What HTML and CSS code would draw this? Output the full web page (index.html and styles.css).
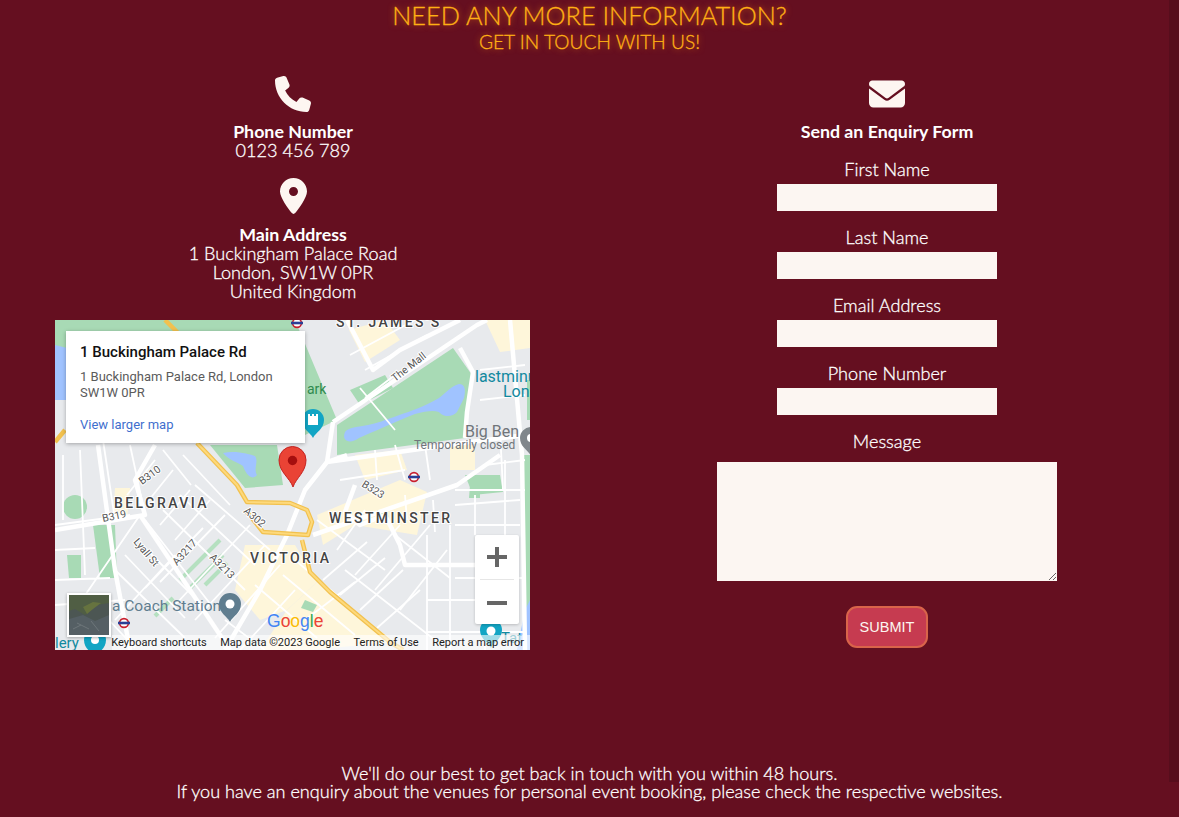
FILE: index.html
```html
<!DOCTYPE html>
<html lang="en">
<head>
    <meta charset="UTF-8">
    <meta name="viewport" content="width=device-width, initial-scale=1.0">
    <title>Contact</title>
    <link rel="stylesheet" href="styles.css">
</head>
<body>
<div class="edge"></div>

<header class="intro">
    <h1>NEED ANY MORE INFORMATION?</h1>
    <h2>GET IN TOUCH WITH US!</h2>
</header>

<main class="contact">
    <section class="details">
        <svg class="icon phone" viewBox="0 0 512 512"><path d="M164.9 24.6c-7.7-18.6-28-28.5-47.4-23.2l-88 24C12.1 30.2 0 46 0 64C0 311.4 200.6 512 448 512c18 0 33.8-12.1 38.6-29.5l24-88c5.3-19.4-4.6-39.7-23.2-47.4l-96-40c-16.3-6.8-35.2-2.1-46.3 11.6L304.7 368C234.3 334.7 177.3 277.7 144 207.3L193.3 167c13.7-11.2 18.4-30 11.6-46.3l-40-96z"/></svg>
        <h3>Phone Number</h3>
        <p>0123 456 789</p>
        <svg class="icon pin" viewBox="0 0 384 512"><path d="M215.7 499.2C267 435 384 279.4 384 192C384 86 298 0 192 0S0 86 0 192c0 87.4 117 243 168.3 307.2c12.3 15.3 35.1 15.3 47.4 0zM192 256c-35.3 0-64-28.7-64-64s28.7-64 64-64s64 28.7 64 64s-28.7 64-64 64z"/></svg>
        <h3 class="address-title">Main Address</h3>
        <p>1 Buckingham Palace Road<br>London, SW1W 0PR<br>United Kingdom</p>

        <div class="map">
            <svg class="map-art" viewBox="0 0 475 330">
                <defs>
                    <g id="tube">
                        <circle r="4.4" fill="#fff" stroke="#c8202f" stroke-width="1.6"/>
                        <rect x="-6" y="-1.3" width="12" height="2.6" fill="#2b3f96"/>
                    </g>
                    <path id="drop" d="M0 0C-3-6-11-9-11-18a11 11 0 0 1 22 0C11-9 3-6 0 0z"/>
                </defs>

                <rect width="475" height="330" fill="#e8eaed"/>

                <!-- built up bits -->
                <g fill="#fef6da">
                    <path d="M262 195L345 160 372 172 362 215 300 205 268 225z"/>
                    <path d="M190 225L240 225 262 262 232 290 205 300 180 270z"/>
                    <path d="M232 290L262 262 340 322 255 330 205 330z"/>
                    <path d="M300 135L345 130 352 150 310 160z"/>
                    <path d="M90 0L135 0 130 12 90 12z"/>
                    <path d="M294 10L330 0 345 20 310 42z"/>
                    <path d="M430 0L475 0 475 28 445 32z"/>
                    <path d="M60 168L75 168 72 200 58 200z"/>
                    <path d="M395 125L420 125 420 150 395 150z"/>
                </g>

                <!-- parks -->
                <g fill="#a8dab5">
                    <path d="M0 0L110 0 240 0 282 100 250 115 180 110 130 80 0 60z"/>
                    <path d="M282 105L398 28 417 55 412 105 410 118 282 135z"/>
                    <path d="M155 125L222 125 228 165 190 168z"/>
                    <path d="M38 205L60 205 62 258 45 258z"/>
                    <path d="M12 235L26 235 26 258 14 258z"/>
                    <path d="M20 175a8 8 0 0 1 0 24a8 8 0 0 1 0-24z"/>
                    <path d="M467 135L475 135 475 290 470 290z"/>
                    <path d="M295 70L330 55 338 68 305 85z"/>
                    <path d="M415 165L425 165 425 178 414 178z"/>
                    <path d="M472 60L475 60 475 100 472 100z"/>
                    <path d="M410 155L445 155 448 172 418 175z"/>
                    <path d="M322 190L332 190 334 200 322 200z"/>
                    <path d="M250 280L262 285 258 292 246 288z"/>
                </g>
                <g fill="none" stroke="#b5e0c0" stroke-width="4">
                    <path d="M100 296L118 278"/>
                    <path d="M125 260L165 220"/>
                    <path d="M135 268L168 235"/>
                    <path d="M150 265L172 243"/>
                </g>

                <!-- water -->
                <g fill="#a0c3ff">
                    <path d="M290 112C296 105 310 108 330 100C360 90 372 85 384 78C392 72 396 66 404 64C410 64 411 70 409 78C406 84 404 88 402 92C398 97 390 97 386 94C384 90 374 90 360 94C340 102 318 112 304 118C296 124 286 122 290 112z"/>
                    <path d="M0 25L12 28 12 80 0 80z"/>
                    <path d="M168 133C180 130 195 134 200 136C204 142 198 148 202 155C196 162 190 152 188 146C182 142 174 140 168 133z"/>
                    <path d="M470 290L475 280 475 330 462 330z"/>
                </g>

                <!-- side streets -->
                <g fill="none" stroke="#fff" stroke-width="1.8">
                    <path d="M8 135L8 200M25 130L30 255M48 120L60 200M75 125L90 195M108 130L136 165M128 135L175 185"/>
                    <path d="M0 205L75 195M0 260L55 258M0 285L70 280M85 195L20 290M0 230L40 228"/>
                    <path d="M90 200L160 290M108 190L190 270M125 175L200 245M140 165L215 230M60 250L130 318M40 285L80 328"/>
                    <path d="M120 235L60 300M148 208L90 268M170 195L105 262M195 205L120 285M210 225L140 300M225 245L160 318M240 270L185 330"/>
                    <path d="M70 235L130 298M84 222L146 284M100 140L72 175M118 150L90 185M135 170L105 205M155 180L120 220"/>
                    <path d="M170 300L210 330M200 265L262 318M228 255L300 315"/>
                    <path d="M262 200L330 250M282 230L310 190M300 255L345 205M320 270L375 205M345 290L392 230M290 250L380 320M340 215L395 258"/>
                    <path d="M268 260L312 222M285 275L330 238M305 290L348 250M322 308L365 270M250 300L300 262M240 240L285 278"/>
                    <path d="M372 215L372 330M395 205L395 330M420 175L420 215M400 258L470 258M372 280L420 280M372 312L470 312M340 125L350 160M370 125L375 160M445 110L448 170M400 170L470 170"/>
                    <path d="M378 180L380 212M400 185L465 180M400 205L465 205M350 175L352 200M430 215L430 330M450 140L450 215"/>
                    <path d="M295 35L360 0M310 50L372 15M340 55L310 78M305 68L340 110M320 130L322 160M285 160L350 150M430 145L470 140M425 50L470 45M425 80L470 75"/>
                </g>

                <!-- main white roads -->
                <g fill="none" stroke="#fff" stroke-width="4.500" stroke-linejoin="round">
                    <path d="M278 102L422 5 432 0"/>
                    <path d="M272 142L408 123 470 115"/>
                    <path d="M405 28L418 52 412 92 410 118"/>
                    <path d="M258 215L402 165 445 135"/>
                    <path d="M272 142L250 170 232 215 205 270 170 330"/>
                    <path d="M278 102L272 142 292 135"/>
                    <path d="M0 210L90 195 80 160 100 125"/>
                    <path d="M43 125L60 250 75 330"/>
                    <path d="M85 195L125 255 175 330"/>
                    <path d="M300 165L290 192 305 205 330 195 345 225 350 245 420 245"/>
                    <path d="M292 0L318 50 345 30 405 0"/>
                    <path d="M455 0L467 135 470 330"/>
                </g>

                <!-- A roads -->
                <g fill="none" stroke="#f2c14e" stroke-width="4.5" stroke-linejoin="round">
                    <path d="M110 0L145 35"/>
                    <path d="M0 122L10 110"/>
                    <path d="M142 123L182 165 192 182 235 183 252 190 257 202 253 215 208 212 192 192"/>
                    <path d="M247 220L255 252 275 272 335 322 348 330"/>
                </g>
                <g fill="none" stroke="#fdd97c" stroke-width="2" stroke-linejoin="round">
                    <path d="M142 123L182 165 192 182 235 183 252 190 257 202 253 215 208 212 192 192"/>
                    <path d="M247 220L255 252 275 272 335 322 348 330"/>
                </g>

                <!-- labels -->
                <text class="area" x="59" y="188">BELGRAVIA</text>
                <text class="area" x="274" y="203">WESTMINSTER</text>
                <text class="area" x="195" y="243">VICTORIA</text>
                <text class="area" x="281" y="7">ST. JAMES'S</text>
                <text class="road" transform="translate(87 165) rotate(-36)">B310</text>
                <text class="road" transform="translate(48 202) rotate(-12)">B319</text>
                <text class="road" transform="translate(78 222) rotate(50)">Lyall St</text>
                <text class="road" transform="translate(122 246) rotate(-48)">A3217</text>
                <text class="road" transform="translate(154 238) rotate(45)">A3213</text>
                <text class="road" transform="translate(188 192) rotate(40)">A302</text>
                <text class="road" transform="translate(306 166) rotate(32)">B323</text>
                <text class="road" transform="translate(340 62) rotate(-38)">The Mall</text>
                <text class="park" x="252" y="74">ark</text>
                <text class="poi" x="420" y="62">lastminu</text>
                <text class="poi" x="448" y="77">Lon</text>
                <text class="sight" x="410" y="117">Big Ben</text>
                <text class="closed" x="359" y="129">Temporarily closed</text>
                <text class="station" x="57" y="291">a Coach Station</text>
                <text class="poi small" x="0" y="328">lery</text>
                <text class="poi small" x="446" y="323">Tat</text>

                <!-- markers -->
                <use href="#tube" x="242" y="3"/>
                <use href="#tube" x="359" y="157"/>
                <use href="#tube" x="69" y="303"/>
                <use href="#drop" x="258" y="118" fill="#12a5c4"/>
                <path d="M253 94h2v2h2v-2h2v2h2v-2h2v11h-10z" fill="#fff"/>
                <use href="#drop" x="175" y="302" fill="#5f7d8f"/>
                <circle cx="175" cy="284" r="4.5" fill="#fff"/>
                <use href="#drop" x="476" y="136" fill="#80868b"/>
                <circle cx="476" cy="118" r="4" fill="#fff"/>
                <use href="#drop" x="40" y="338" fill="#12a5c4"/>
                <circle cx="40" cy="320" r="4" fill="#fff"/>
                <use href="#drop" x="436" y="328" fill="#12a5c4"/>
                <circle cx="436" cy="311" r="4.5" fill="#fff"/>

                <path d="M238 167C235 158 224 152 224 140a13.5 13.5 0 0 1 27 0C251 152 241 158 238 167z" fill="#ea4335" stroke="#c5221f"/>
                <circle cx="237.500" cy="140.500" r="4.700" fill="#a50e0e"/>

                <text class="logo" x="212" y="307"><tspan fill="#4285f4">G</tspan><tspan fill="#ea4335">o</tspan><tspan fill="#fbbc04">o</tspan><tspan fill="#4285f4">g</tspan><tspan fill="#34a853">l</tspan><tspan fill="#ea4335">e</tspan></text>
            </svg>

            <div class="map-card">
                <h4>1 Buckingham Palace Rd</h4>
                <p>1 Buckingham Palace Rd, London SW1W 0PR</p>
                <a href="#">View larger map</a>
            </div>

            <div class="zoom-box">
                <div class="zoom-btn"><span class="bar"></span><span class="bar tall"></span></div>
                <div class="zoom-btn"><span class="bar"></span></div>
            </div>

            <svg class="thumb" viewBox="0 0 40 40">
                <rect width="40" height="40" fill="#4c5653"/>
                <path d="M0 0H40V8L28 10 16 20 6 14 0 16z" fill="#505e44"/>
                <path d="M14 12L24 7 32 8 24 14 18 19z" fill="#66733f"/>
                <path d="M0 24L14 20 26 26 40 20V40H0z" fill="#555f64"/>
                <path d="M8 28L20 34M22 26L30 36M4 34L12 30" stroke="#6d767a" fill="none"/>
            </svg>

            <div class="map-foot">
                <span>Keyboard shortcuts</span>
                <span>Map data ©2023 Google</span>
                <span>Terms of Use</span>
                <span>Report a map error</span>
            </div>
        </div>
    </section>

    <section class="enquiry">
        <svg class="icon mail" viewBox="0 0 512 512"><path d="M48 64C21.5 64 0 85.500 0 112c0 15.100 7.100 29.300 19.200 38.400L236.800 313.600c11.400 8.500 27 8.500 38.400 0L492.800 150.400c12.100-9.100 19.200-23.300 19.200-38.400c0-26.500-21.500-48-48-48H48zM0 176V384c0 35.300 28.700 64 64 64H448c35.300 0 64-28.700 64-64V176L294.400 339.200c-22.800 17.100-54 17.100-76.800 0L0 176z"/></svg>
        <h3>Send an Enquiry Form</h3>
        <form class="form">
            <label for="first">First Name</label>
            <input id="first" type="text">
            <label for="last">Last Name</label>
            <input id="last" type="text">
            <label for="email">Email Address</label>
            <input id="email" type="text">
            <label for="tel">Phone Number</label>
            <input id="tel" type="text">
            <label for="msg">Message</label>
            <textarea id="msg"></textarea>
            <button type="button">SUBMIT</button>
        </form>
    </section>
</main>

<footer class="note">
    We'll do our best to get back in touch with you within 48 hours.<br>
    If you have an enquiry about the venues for personal event booking, please check the respective websites.
</footer>
</body>
</html>
```

FILE: styles.css
```css
html,
body {
    margin: 0;
    padding: 0;
    height: 817px;
    overflow: hidden;
}

body {
    position: relative;
    background: #650f20;
    color: #fff;
    font-family: Lato, "Noto Sans", sans-serif;
    font-size: 18.100px;
    font-weight: 300;
    line-height: 19px;
    text-align: center;
    -webkit-text-stroke: 0.3px;
}

.edge {
    position: absolute;
    top: 0;
    right: 0;
    width: 10px;
    height: 782px;
    background: #570d1c;
}

.intro h1,
.intro h2 {
    margin: 0;
    font-weight: 300;
    color: #ffb014;
    text-shadow: 0 0 6px #d96a10;
}

.intro h1 {
    font-size: 25.300px;
    line-height: 30px;
}

.intro h2 {
    font-size: 19.200px;
    line-height: 24px;
}

.contact {
    display: grid;
    grid-template-columns: 586px 584px;
    column-gap: 9px;
    margin-top: 22px;
}

.icon {
    display: block;
    margin: 0 auto;
    fill: #fdf6f1;
}

.phone {
    width: 36px;
    height: 36px;
}

.pin {
    width: 27px;
    height: 36px;
    margin-top: 18px;
}

.mail {
    width: 36px;
    height: 36px;
}

.details h3,
.enquiry h3 {
    margin: 10px 0 0;
    font-size: 17.800px;
    font-weight: 700;
    line-height: 19px;
    -webkit-text-stroke: 0;
}

.details .address-title {
    margin-top: 11px;
}

.details p {
    margin: 0;
}

.map {
    position: relative;
    width: 475px;
    height: 330px;
    margin: 19px 0 0 55px;
    overflow: hidden;
    font-family: Roboto, sans-serif;
    font-weight: 400;
    text-align: left;
    -webkit-text-stroke: 0;
}

.map-art {
    display: block;
    width: 475px;
    height: 330px;
    font-family: Roboto, sans-serif;
}

.area {
    font-size: 14px;
    font-weight: 500;
    letter-spacing: 2.400px;
    fill: #444;
    stroke: #fff;
    stroke-width: 2px;
    paint-order: stroke;
}

.road {
    font-size: 10.500px;
    fill: #555;
    stroke: #fff;
    stroke-width: 2px;
    paint-order: stroke;
}

.park {
    font-size: 14px;
    fill: #2f8a4e;
}

.poi {
    font-size: 16px;
    fill: #12899f;
}

.poi.small {
    font-size: 15px;
}

.sight {
    font-size: 16px;
    fill: #70757a;
}

.closed {
    font-size: 12px;
    fill: #70757a;
}

.station {
    font-size: 15.500px;
    fill: #5f7d8f;
}

.logo {
    font-family: "Liberation Sans", sans-serif;
    font-size: 17.500px;
}

.map-card {
    position: absolute;
    top: 11px;
    left: 11px;
    box-sizing: border-box;
    width: 239px;
    height: 112px;
    padding: 13px 14px;
    background: #fff;
    box-shadow: 0 1px 4px rgba(0, 0, 0, 0.3);
}

.map-card h4 {
    margin: 0;
    color: #111;
    font-size: 15px;
    font-weight: 500;
    line-height: 16px;
}

.map-card p {
    margin: 9px 0 0;
    color: #5b5b5b;
    font-size: 13px;
    line-height: 16px;
}

.map-card a {
    display: block;
    margin-top: 16px;
    color: #3f6fce;
    font-size: 13px;
    line-height: 16px;
    text-decoration: none;
}

.zoom-box {
    position: absolute;
    top: 215px;
    left: 420px;
    width: 44px;
    height: 89px;
    background: #fff;
    border-radius: 2px;
    box-shadow: 0 1px 3px rgba(0, 0, 0, 0.2);
}

.zoom-btn {
    position: relative;
    height: 44px;
}

.zoom-btn + .zoom-btn {
    height: 44px;
    margin: 0 5px;
    border-top: 1px solid #e6e6e6;
}

.bar {
    position: absolute;
    top: 20px;
    left: 12px;
    width: 20px;
    height: 4px;
    background: #666;
}

.zoom-btn + .zoom-btn .bar {
    top: 21px;
    left: 7px;
}

.bar.tall {
    top: 12px;
    left: 20px;
    width: 4px;
    height: 20px;
}

.thumb {
    position: absolute;
    top: 273px;
    left: 12px;
    width: 40px;
    height: 40px;
    border: 2px solid #fff;
    box-shadow: 0 1px 3px rgba(0, 0, 0, 0.3);
}

.map-foot {
    position: absolute;
    right: 0;
    bottom: 0;
    display: flex;
    justify-content: flex-end;
    gap: 13.500px;
    box-sizing: border-box;
    width: 418px;
    height: 15px;
    padding-right: 6px;
    background: rgba(255, 255, 255, 0.6);
    color: #222;
    font-size: 11px;
    line-height: 15px;
    white-space: nowrap;
}

.enquiry h3 {
    margin-top: 10px;
}

.form {
    display: flex;
    flex-direction: column;
    align-items: center;
    margin-top: 19px;
}

.form label {
    display: block;
    line-height: 19px;
}

.form input,
.form textarea {
    display: block;
    box-sizing: border-box;
    border: 0;
    border-radius: 0;
    background: #fcf6f2;
}

.form input {
    width: 220px;
    height: 27px;
    margin: 5px 0 17px;
}

.form textarea {
    width: 340px;
    height: 119px;
    margin: 11px 0 25px;
}

.form button {
    box-sizing: border-box;
    width: 82px;
    height: 42px;
    padding: 0;
    border: 2px solid #d9644a;
    border-radius: 11px;
    background: #c63b50;
    color: #fdf6f1;
    font-family: "Liberation Sans", Arial, sans-serif;
    font-size: 14.500px;
    -webkit-text-stroke: 0;
}

.note {
    position: absolute;
    left: 0;
    right: 0;
    top: 764px;
    line-height: 18px;
}
```
